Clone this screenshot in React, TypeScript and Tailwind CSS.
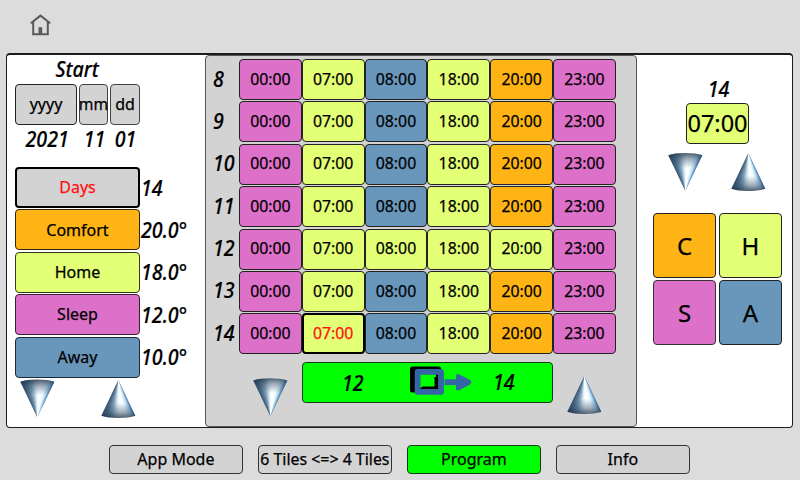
import React from 'react';

const PINK = 'bg-[#dd70c9]';
const LIME = 'bg-[#e3ff76]';
const BLUE = 'bg-[#6996bb]';
const ORANGE = 'bg-[#ffb415]';

const days = [8, 9, 10, 11, 12, 13, 14];

function Cone({ up = false }: { up?: boolean }) {
  return (
    <div
      className={`h-[40px] w-[35px] shrink-0 bg-[linear-gradient(180deg,rgba(22,42,64,0.75)_1px,rgba(30,55,80,0.4)_7px,rgba(40,70,100,0)_16px),conic-gradient(from_-26deg_at_17.3px_39px,#34526f_0deg,#55758f_8deg,#8aa9c0_16deg,#d5eaf4_23deg,#ffffff_29deg,#f2fcff_38deg,#b5daf3_45deg,#3c6c9c_52deg,#2c4a68_60deg)] [clip-path:path('M17.3_39L0.3_3.2Q7_1_17.3_1Q28_1_34.4_3.2Z')] ${up ? '-scale-y-100' : ''}`}
    />
  );
}

function Value({ children, className = 'origin-left' }: { children: React.ReactNode; className?: string }) {
  return (
    <span className={`inline-block scale-x-[0.935] whitespace-nowrap text-[21px] leading-[20px] font-medium italic [-webkit-text-stroke:0.2px_#000] ${className}`}>
      {children}
    </span>
  );
}

function Tile({ children, className }: { children?: React.ReactNode; className: string }) {
  return (
    <button className={`flex shrink-0 items-center justify-center rounded-[4px] border whitespace-nowrap [-webkit-text-stroke:0.25px_currentColor] ${className}`}>
      {children}
    </button>
  );
}

const settings = [
  { label: 'Days', value: '14', style: 'bg-[#d3d3d3] border-2 border-black text-[#ff0f0f]' },
  { label: 'Comfort', value: '20.0°', style: `${ORANGE} border-[#302409]` },
  { label: 'Home', value: '18.0°', style: `${LIME} border-[#34391d]` },
  { label: 'Sleep', value: '12.0°', style: `${PINK} border-[#35202f]` },
  { label: 'Away', value: '10.0°', style: `${BLUE} border-[#1b2a36]` },
];

const times = [
  { time: '00:00', color: PINK },
  { time: '07:00', color: LIME },
  { time: '08:00', color: BLUE },
  { time: '18:00', color: LIME },
  { time: '20:00', color: ORANGE },
  { time: '23:00', color: PINK },
];

export default function App() {
  return (
    <div className="flex h-[480px] w-[800px] flex-col overflow-hidden bg-[#dcdcdc] font-['Noto_Sans',sans-serif] text-[16px] text-black">
      <header className="h-[53px] shrink-0 pt-[14px] pl-[30px]">
        <svg width="21" height="22" viewBox="0 0 21 22" fill="none" stroke="#5a5a5a" strokeWidth="2">
          <path d="M0.8 9.2L10.5 1.6L20.2 9.2M3.2 7.5V20.2H17.8V7.5" />
          <path d="M8.5 20V13.2H12.2V20Z" fill="#5a5a5a" stroke="none" />
        </svg>
      </header>

      <main className="ml-[6px] flex h-[375px] w-[787px] shrink-0 rounded-[4px] border-[1.5px] border-t-2 border-[#1c1c1c] bg-white">
        <section className="flex w-[198px] shrink-0 flex-col pt-[4px] pl-[8px]">
          <div className="flex h-[25px] justify-center pr-[65px]">
            <Value className="origin-center">Start</Value>
          </div>
          <div className="flex gap-[2px]">
            <Tile className="h-[41px] w-[62px] border-[#222] bg-[#d3d3d3] pb-[1.2px]">yyyy</Tile>
            <Tile className="h-[41px] w-[29px] border-[#444] bg-[#d3d3d3] text-[15.7px]">mm</Tile>
            <Tile className="h-[41px] w-[30px] border-[#444] bg-[#d3d3d3] pb-[1.2px]">dd</Tile>
          </div>
          <div className="flex h-[42px] pt-[4px] pl-[1px]">
            <div className="w-[62px] text-center"><Value className="origin-center">2021</Value></div>
            <div className="w-[33px] text-center"><Value className="origin-center">11</Value></div>
            <div className="w-[30px] text-center"><Value className="origin-center">01</Value></div>
          </div>
          <div className="flex flex-col gap-[1.4px]">
            {settings.map((s) => (
              <div key={s.label} className="flex h-[41px] items-center gap-[1px]">
                <Tile className={`h-[41px] w-[125px] pb-[0.4px] ${s.style}`}>{s.label}</Tile>
                <Value>{s.value}</Value>
              </div>
            ))}
          </div>
          <div className="flex gap-[46px] pt-[1px] pl-[5px]">
            <Cone />
            <Cone up />
          </div>
        </section>

        <section className="w-[432px] shrink-0 rounded-[4px] border border-[#555] bg-[#d3d3d3] pt-[3px]">
          <div className="flex flex-col gap-[1.4px]">
            {days.map((day) => (
              <div key={day} className="flex h-[41px] items-center">
                <div className="w-[33px] shrink-0 pt-[2px] pl-[7px]"><Value>{day}</Value></div>
                {times.map((t) => {
                  const selected = day === 14 && t.time === '07:00';
                  const color = day === 12 && (t.time === '08:00' || t.time === '20:00') ? LIME : t.color;
                  return (
                    <Tile
                      key={t.time}
                      className={`h-[41px] w-[62.8px] text-[15.8px] ${color} ${selected ? 'border-2 border-black text-[#ff0f0f]' : 'border-[#222]'}`}
                    >
                      {t.time}
                    </Tile>
                  );
                })}
              </div>
            ))}
          </div>
          <div className="flex pt-[8px] pl-[47px]">
            <div className="w-[49px] pt-[15px]"><Cone /></div>
            <div className="flex h-[41px] w-[251px] items-center rounded-[4px] border border-[#143c14] bg-[#00ff00] pl-[39px]">
              <Value>12</Value>
              <svg width="62" height="30" viewBox="0 0 62 30" className="mb-[4px] ml-[45px] shrink-0">
                <rect x="2.5" y="3" width="26" height="21" fill="none" stroke="#000" strokeWidth="5" strokeLinejoin="round" />
                <path d="M26.5 11V22.5H12" fill="none" stroke="#000" strokeWidth="4" />
                <rect x="7.6" y="5.8" width="23.4" height="20" fill="none" stroke="#3465a4" strokeWidth="5.8" strokeLinejoin="round" />
                <path d="M34.5 16.2H48" stroke="#3465a4" strokeWidth="5.8" />
                <path d="M46 10.5Q45.5 7.6 49 8.2L60 14Q62.4 16.2 60 18.4L49 24.2Q45.5 24.8 46 22Z" fill="#3465a4" />
              </svg>
              <div className="ml-[21px] pt-[2px]"><Value>14</Value></div>
            </div>
            <div className="pt-[13px] pl-[14px]"><Cone up /></div>
          </div>
        </section>

        <section className="flex w-[154px] flex-col pt-[24px] pl-[16px]">
          <div className="h-[24px] w-[131px] text-center"><Value className="origin-center">14</Value></div>
          <Tile className={`ml-[33px] h-[41px] w-[63px] border-[#222] text-[23.5px] ${LIME}`}>07:00</Tile>
          <div className="flex h-[69px] pt-[8px] pl-[15px]">
            <Cone />
            <div className="pl-[28px]"><Cone up /></div>
          </div>
          <div className="grid grid-cols-[63px_63px] gap-x-[3px] gap-y-[2px] text-[24px]">
            <Tile className={`h-[65px] border-[#222] ${ORANGE}`}>C</Tile>
            <Tile className={`h-[65px] border-[#222] ${LIME}`}>H</Tile>
            <Tile className={`h-[65px] border-[#333] ${PINK}`}>S</Tile>
            <Tile className={`h-[65px] border-[#222] ${BLUE}`}>A</Tile>
          </div>
        </section>
      </main>

      <nav className="flex gap-[15.2px] pt-[17px] pl-[109px]">
        <Tile className="h-[29px] w-[133.8px] border-[#333] bg-[#d3d3d3] pb-[1.2px]">App Mode</Tile>
        <Tile className="h-[29px] w-[133.8px] border-[#333] bg-[#d3d3d3] text-[15.9px]">6 Tiles &lt;=&gt; 4 Tiles</Tile>
        <Tile className="h-[29px] w-[133.8px] border-[#143c14] bg-[#00ff00] pb-[1.2px]">Program</Tile>
        <Tile className="h-[29px] w-[133.8px] border-[#333] bg-[#d3d3d3] pb-[1.2px]">Info</Tile>
      </nav>
    </div>
  );
}
